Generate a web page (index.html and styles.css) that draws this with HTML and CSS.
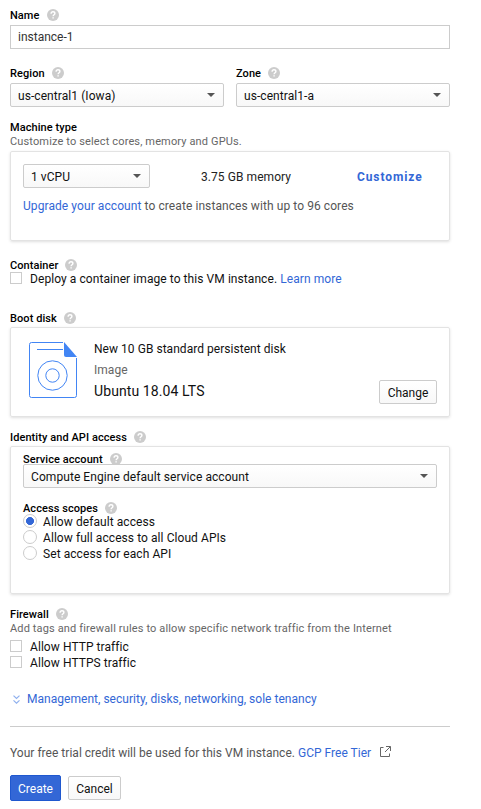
FILE: index.html
```html
<!DOCTYPE html>
<html lang="en">
<head>
<meta charset="utf-8">
<title>Create an instance</title>
<link rel="stylesheet" href="styles.css">
</head>
<body>
<svg class="defs" width="0" height="0" aria-hidden="true">
  <symbol id="help" viewBox="0 0 12 12">
    <circle cx="6" cy="6" r="6" fill="#ccc"/>
    <path d="M4.1 4.7C4.1 3.5 4.9 2.8 6 2.8s1.9.7 1.9 1.7c0 1.2-1.8 1.4-1.8 2.8M6.1 8.2v1.4" fill="none" stroke="#fff" stroke-width="1.4"/>
  </symbol>
</svg>
<main class="form">
  <section class="name">
    <div class="label"><span>Name</span><svg class="help"><use href="#help"/></svg></div>
    <div class="input">instance-1</div>
  </section>

  <section class="location">
    <div>
      <div class="label"><span>Region</span><svg class="help"><use href="#help"/></svg></div>
      <div class="select"><span>us-central1 (Iowa)</span><i class="caret"></i></div>
    </div>
    <div>
      <div class="label"><span>Zone</span><svg class="help"><use href="#help"/></svg></div>
      <div class="select"><span>us-central1-a</span><i class="caret"></i></div>
    </div>
  </section>

  <section class="machine">
    <div class="label"><span>Machine type</span></div>
    <p class="hint machine-hint">Customize to select cores, memory and GPUs.</p>
    <div class="card">
      <div class="cpu-row">
        <div class="select"><span>1 vCPU</span><i class="caret"></i></div>
        <span class="memory">3.75 GB memory</span>
        <a class="customize">Customize</a>
      </div>
      <p class="upgrade"><a>Upgrade your account</a> to create instances with up to 96 cores</p>
    </div>
  </section>

  <section class="container">
    <div class="label"><span>Container</span><svg class="help"><use href="#help"/></svg></div>
    <div class="option"><i class="checkbox"></i><span class="deploy">Deploy a container image to this VM instance. <a>Learn more</a></span></div>
  </section>

  <section class="boot">
    <div class="label"><span>Boot disk</span><svg class="help"><use href="#help"/></svg></div>
    <div class="card">
      <svg class="disk" viewBox="0 0 48 56" fill="none" stroke="#4285f4">
        <path d="M34 .5H2.5a2 2 0 0 0-2 2v51a2 2 0 0 0 2 2h43a2 2 0 0 0 2-2V16M8 7.5h26"/>
        <path d="M35 0l13 15H37a2 2 0 0 1-2-2z" fill="#4285f4" stroke="none"/>
        <circle cx="23.5" cy="33.5" r="14.7"/>
        <circle cx="23.5" cy="33.5" r="6.7"/>
      </svg>
      <div class="disk-info">
        <p class="disk-type">New 10 GB standard persistent disk</p>
        <p class="disk-kind">Image</p>
        <p class="disk-os">Ubuntu 18.04 LTS</p>
      </div>
      <div class="button change">Change</div>
    </div>
  </section>

  <section class="identity">
    <div class="label"><span>Identity and API access</span><svg class="help"><use href="#help"/></svg></div>
    <div class="card">
      <div class="label"><span>Service account</span><svg class="help"><use href="#help"/></svg></div>
      <div class="select"><span>Compute Engine default service account</span><i class="caret"></i></div>
      <div class="label scopes"><span>Access scopes</span><svg class="help"><use href="#help"/></svg></div>
      <div class="options">
        <div class="option"><i class="radio checked"></i><span>Allow default access</span></div>
        <div class="option"><i class="radio"></i><span>Allow full access to all Cloud APIs</span></div>
        <div class="option"><i class="radio"></i><span>Set access for each API</span></div>
      </div>
    </div>
  </section>

  <section class="firewall">
    <div class="label"><span>Firewall</span><svg class="help"><use href="#help"/></svg></div>
    <p class="hint firewall-hint">Add tags and firewall rules to allow specific network traffic from the Internet</p>
    <div class="option"><i class="checkbox"></i><span>Allow HTTP traffic</span></div>
    <div class="option"><i class="checkbox"></i><span>Allow HTTPS traffic</span></div>
  </section>

  <div class="more">
    <svg class="chevrons" viewBox="0 0 7 9" fill="none" stroke="#8fb0ee" stroke-width="1.2"><path d="M.5.6l3 2.8 3-2.8M.5 5.4l3 2.8 3-2.8"/></svg>
    <a>Management, security, disks, networking, sole tenancy</a>
  </div>

  <footer>
    <p class="trial"><span>Your free trial credit will be used for this VM instance. <a>GCP Free Tier</a></span>
      <svg class="external" viewBox="0 0 12 12" fill="none" stroke="#666"><path d="M4.5 1.5h-3v9h9V7.5M7 .5h4.5V5M11.3.7L6 6"/></svg>
    </p>
    <div class="actions">
      <div class="button primary">Create</div>
      <div class="button cancel">Cancel</div>
    </div>
  </footer>
</main>
</body>
</html>
```

FILE: styles.css
```css
* { box-sizing: border-box; }
body {
  margin: 0;
  background: #fff;
  color: #111;
  font: 12px/16px Roboto, "Liberation Sans", sans-serif;
  white-space: nowrap;
}
p { margin: 0; }
a { color: #3367d6; }
.defs { position: absolute; }
.form { width: 440px; margin-left: 10px; padding-top: 8px; }

.label {
  display: flex;
  align-items: center;
  gap: 7px;
  height: 14px;
  font-size: 11px;
  font-weight: 500;
  line-height: 14px;
  letter-spacing: .07px;
  color: #000;
}
.label span { padding-top: 2px; }
.help { width: 12px; height: 12px; flex: none; }
.hint { padding-top: 1px; font-size: 11px; line-height: 14px; letter-spacing: .14px; color: #666; }

.input, .select {
  height: 24px;
  padding: 0 7px;
  border: 1px solid #ccc;
  line-height: 22px;
}
.input { color: #333; }
.select {
  display: flex;
  align-items: center;
  justify-content: space-between;
  padding-right: 8px;
  border-radius: 2px;
  background: linear-gradient(#fff, #f8f8f8);
  line-height: 24px;
  letter-spacing: .07px;
}
.select span { padding-top: 2px; }
.caret {
  border: 4px solid transparent;
  border-top-color: #555;
  border-bottom: 0;
}
.card {
  border: 1px solid #e3e3e3;
  border-radius: 2px;
  box-shadow: 0 1px 3px rgba(0, 0, 0, .13);
  padding: 0 12px;
}
.option { display: flex; align-items: center; height: 16px; letter-spacing: .07px; }
.option span { padding-top: 2px; }
.checkbox { width: 12px; height: 12px; border: 1px solid #ccc; margin-right: 8px; }
.radio {
  width: 14px;
  height: 14px;
  margin-right: 6px;
  border: 1px solid #ccc;
  border-radius: 50%;
}
.checked { background: radial-gradient(circle, #3367d6 3.7px, transparent 4.3px); }
.button {
  height: 24px;
  border: 1px solid #ccc;
  border-radius: 2px;
  background: linear-gradient(#fff, #f8f8f8);
  line-height: 24px;
  text-align: center;
}

.name .input { margin-top: 3px; }

.location {
  display: grid;
  grid-template-columns: 1fr 1fr;
  gap: 12px;
  margin-top: 17px;
}
.location .select { margin-top: 3px; }

.machine { margin-top: 13px; }
.machine .card { height: 90px; margin-top: 2px; padding-top: 12px; }
.cpu-row { display: flex; align-items: center; }
.cpu-row .select { width: 127px; }
.memory { width: 156px; margin-left: 51px; padding-top: 2px; color: #222; letter-spacing: .07px; }
.customize { padding-top: 2px; font-weight: 700; letter-spacing: .9px; }
.upgrade { margin-top: 10px; color: #555; letter-spacing: .08px; }

.container { margin-top: 17px; }
.container .option { margin-top: -2px; }

.boot { margin-top: 25px; }
.boot .card { display: flex; height: 90px; margin-top: 2px; padding-left: 18px; }
.disk { width: 48px; height: 56px; margin-top: 14px; }
.disk-info { margin: 13px 0 0 17px; letter-spacing: .04px; }
.disk-kind { margin-top: 5px; color: #666; }
.disk-os { margin-top: 5px; font-size: 14px; letter-spacing: .1px; }
.change { width: 58px; margin: 52px 0 0 auto; }

.identity { margin-top: 13px; }
.identity .card { height: 148px; margin-top: 2px; padding-top: 5px; }
.identity .card .select { margin-top: -2px; }
.identity .scopes { margin-top: 13px; }
.options { margin-top: -2px; }

.firewall { margin-top: 13px; }
.firewall-hint { margin-bottom: 2px; }

.more { display: flex; align-items: center; margin: 21px 0 19px 3px; letter-spacing: .03px; }
.chevrons { width: 7px; height: 9px; margin-right: 7px; }

footer { border-top: 1px solid #ccc; padding-top: 18px; }
.trial { display: flex; align-items: center; color: #555; letter-spacing: .02px; }
.external { width: 12px; height: 12px; margin: -2px 0 0 8px; }
.actions { display: flex; align-items: center; gap: 7px; margin-top: 14px; }
.primary {
  width: 51px;
  height: 26px;
  border-color: #1f58cf;
  background: #3367d6;
  color: #fff;
  line-height: 26px;
}
.cancel { width: 53px; }
```
